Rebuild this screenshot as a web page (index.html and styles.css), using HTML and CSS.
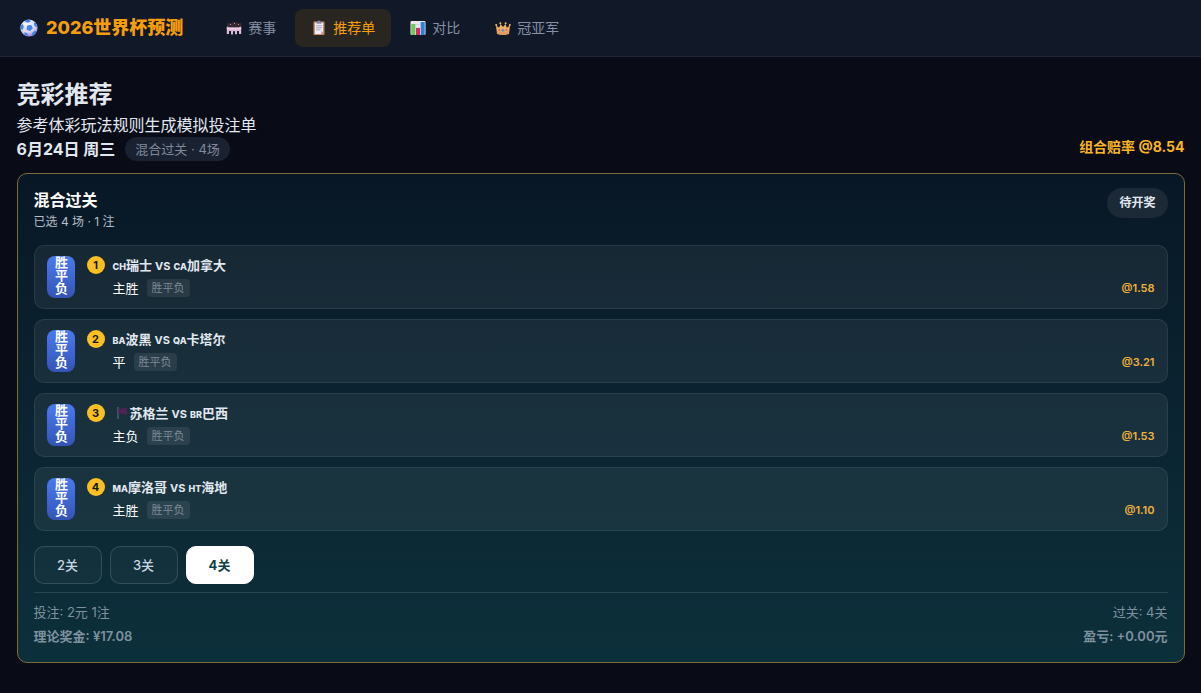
FILE: index.html
```html
<!DOCTYPE html>
<html lang="zh-CN">
<head>
<meta charset="utf-8">
<meta name="viewport" content="width=device-width, initial-scale=1">
<title>2026世界杯预测</title>
<link rel="stylesheet" href="styles.css">
</head>
<body>
<header class="topbar">
  <a class="brand" href="#">
    <svg class="brand-icon" viewBox="0 0 18 18" aria-hidden="true">
      <defs><radialGradient id="ball" cx=".4" cy=".25" r=".85"><stop offset="0" stop-color="#f4f4fb"/><stop offset=".6" stop-color="#d5d3f2"/><stop offset="1" stop-color="#7b62dc"/></radialGradient></defs>
      <circle cx="9" cy="9" r="8.6" fill="url(#ball)"/>
      <path d="M7.2 6.4l4-.4 1.6 3.2-2.6 2.9-3.6-1.4zM5 1.4L9.5.5l1.3 1.7-2.6 1.6-3-.7zM.6 7.1l2-2 1.2 2.6-1.2 3.2-1.8-.8zM4.2 13.2l3.2 1 .7 3-3.2-1.1zM12.2 14l2.6-2.3 1.9.8-2.2 3.4-2.4 1zM14 3.6l1.8.5 1.6 3.6-1.4.4-2-2.2z" fill="#3d83e6"/>
    </svg>
    <span>2026世界杯预测</span>
  </a>
  <nav class="nav">
    <a class="nav-link" href="#">
      <svg class="nav-icon" viewBox="0 0 16 16" aria-hidden="true">
        <path d="M1 7V3.5l1.5-1L4 3.2 7 2h3l3 1.2 1.5-.7 1 1V7z" fill="#332936"/>
        <path d="M4 4h1v1H4zm4-1h1v1H8zm4 1h1v1h-1z" fill="#c99055"/>
        <path d="M.8 6.400L3 7.200h10l2.200-.8V14H13v-3h-2v3.200H9v-3H7v3.200H5V11H3v3H.8z" fill="#dcb9d5"/>
        <path d="M.8 7.500L3 8.300h10l2.200-.8v1.200l-2.200.6H3l-2.200-.6z" fill="#f2dcea"/>
      </svg>
      <span>赛事</span>
    </a>
    <a class="nav-link active" href="#" aria-current="page">
      <svg class="nav-icon" viewBox="0 0 16 16" aria-hidden="true">
        <rect x="2.5" y="1.5" width="11" height="13.5" rx="1" fill="#c98a68"/>
        <path d="M4 2.8h8v8.7L10 14H4z" fill="#f1edf8"/>
        <path d="M12 11.5L10 14v-2.5z" fill="#b9afd0"/>
        <path d="M5.5 1.5h1.2a1.4 1.4 0 012.6 0h1.2v2.2h-5z" fill="#8d8aa5"/>
        <path d="M5 5.8h6M5 7.8h6M5 9.8h4.5" stroke="#9c98b5" stroke-width=".9"/>
      </svg>
      <span>推荐单</span>
    </a>
    <a class="nav-link" href="#">
      <svg class="nav-icon" viewBox="0 0 16 16" aria-hidden="true">
        <rect x=".5" y="1" width="15" height="14" rx="1" fill="#e9e5f1"/>
        <path d="M.5 4.5h15M.5 8h15M.5 11.5h15" stroke="#c9c3d6" stroke-width=".6"/>
        <rect x="1.3" y="4" width="4" height="11" fill="#6fc85a"/>
        <rect x="6" y="8" width="4" height="7" fill="#d52c63"/>
        <rect x="10.7" y="2" width="4" height="13" fill="#2b83d3"/>
      </svg>
      <span>对比</span>
    </a>
    <a class="nav-link" href="#">
      <svg class="nav-icon" viewBox="0 0 16 16" aria-hidden="true">
        <path d="M1 5.5l3.2 2.2L5.5 4l2.5 3 2.5-3 1.3 3.7L15 5.5 14 14q-6 1.8-12 0z" fill="#f2b066"/>
        <path d="M2 11q6 1.8 12 0l-.3 2.8q-5.7 1.6-11.4 0z" fill="#e09a62"/>
        <circle cx="1.2" cy="5" r="1" fill="#f6bf62"/><circle cx="5.4" cy="3.2" r="1" fill="#f6bf62"/><circle cx="10.6" cy="3.2" r="1" fill="#f6bf62"/><circle cx="14.8" cy="5" r="1" fill="#f6bf62"/>
        <circle cx="8" cy="10.3" r="1.5" fill="#7a8bb8"/><circle cx="4.4" cy="10" r="1" fill="#d9655f"/><circle cx="11.6" cy="10" r="1" fill="#d9655f"/>
      </svg>
      <span>冠亚军</span>
    </a>
  </nav>
</header>

<main class="page">
  <h1 class="page-title">竞彩推荐</h1>
  <p class="page-sub">参考体彩玩法规则生成模拟投注单</p>
  <div class="day-row">
    <div class="day">
      <h2 class="day-title">6月24日 周三</h2>
      <span class="day-chip">混合过关 · 4场</span>
    </div>
    <strong class="combo-odds">组合赔率 @8.54</strong>
  </div>

  <section class="ticket">
    <div class="ticket-head">
      <div>
        <h3 class="ticket-title">混合过关</h3>
        <p class="ticket-sub">已选 4 场 · 1 注</p>
      </div>
      <span class="status">待开奖</span>
    </div>

    <ol class="picks">
      <li class="pick">
        <span class="play">胜平负</span>
        <span class="num">1</span>
        <div class="info">
          <div class="teams"><span class="code">CH</span>瑞士 <span class="vs">VS</span> <span class="code">CA</span>加拿大</div>
          <div class="choice"><span>主胜</span><span class="tag">胜平负</span></div>
        </div>
        <span class="odds">@1.58</span>
      </li>
      <li class="pick">
        <span class="play">胜平负</span>
        <span class="num">2</span>
        <div class="info">
          <div class="teams"><span class="code">BA</span>波黑 <span class="vs">VS</span> <span class="code">QA</span>卡塔尔</div>
          <div class="choice"><span>平</span><span class="tag">胜平负</span></div>
        </div>
        <span class="odds">@3.21</span>
      </li>
      <li class="pick">
        <span class="play">胜平负</span>
        <span class="num">3</span>
        <div class="info">
          <div class="teams"><svg class="flag" viewBox="0 0 17 14" aria-hidden="true"><path d="M5 1v12" stroke="#65717d" stroke-width="1"/><path d="M5.5 2q2.5 1 4.5 0t4 0v6q-2 1-4 0t-4.500 0z" fill="#4b2355"/></svg>苏格兰 <span class="vs">VS</span> <span class="code">BR</span>巴西</div>
          <div class="choice"><span>主负</span><span class="tag">胜平负</span></div>
        </div>
        <span class="odds">@1.53</span>
      </li>
      <li class="pick">
        <span class="play">胜平负</span>
        <span class="num">4</span>
        <div class="info">
          <div class="teams"><span class="code">MA</span>摩洛哥 <span class="vs">VS</span> <span class="code">HT</span>海地</div>
          <div class="choice"><span>主胜</span><span class="tag">胜平负</span></div>
        </div>
        <span class="odds">@1.10</span>
      </li>
    </ol>

    <div class="passes">
      <button class="pass" type="button">2关</button>
      <button class="pass" type="button">3关</button>
      <button class="pass selected" type="button" aria-pressed="true">4关</button>
    </div>

    <div class="summary">
      <div class="sum-row"><span>投注: 2元 1注</span><span>过关: 4关</span></div>
      <div class="sum-row strong"><span>理论奖金: ¥17.08</span><span>盈亏: +0.00元</span></div>
    </div>
  </section>
</main>
</body>
</html>
```
FILE: styles.css
```css
* { box-sizing: border-box; }

body {
  margin: 0;
  min-height: 100vh;
  background: #090c17;
  color: #e2e8f0;
  font: 16px/24px Inter, "Noto Sans CJK SC", sans-serif;
}

h1, h2, h3, p, ol { margin: 0; padding: 0; }
a { color: inherit; text-decoration: none; }

.topbar {
  display: flex;
  align-items: center;
  gap: 27px;
  height: 57px;
  padding: 0 20px;
  background: #111827;
  border-bottom: 1px solid #1e2638;
}
.brand {
  display: flex;
  align-items: center;
  gap: 8px;
  color: #f59e0b;
  font-size: 18px;
  font-weight: 800;
}
.brand-icon { width: 18px; height: 18px; }
.nav { display: flex; gap: 3px; }
.nav-link {
  display: flex;
  align-items: center;
  gap: 6px;
  height: 38px;
  padding: 0 16px;
  border-radius: 8px;
  color: #8490a5;
  font-size: 14px;
}
.nav-link.active { background: #292621; color: #f59e0b; }
.nav-icon { width: 16px; height: 16px; }

.page {
  max-width: 1200px;
  margin: 0 auto;
  padding: 20px 16px 31px;
}
.page-title { font-size: 24px; line-height: 36px; font-weight: 700; }
.day-row {
  display: flex;
  justify-content: space-between;
  margin-bottom: 12px;
}
.day { display: flex; align-items: center; gap: 10px; }
.day-title { font-size: 16px; line-height: 24px; font-weight: 700; }
.day-chip {
  padding: 0 10px;
  border-radius: 12px;
  background: #1a2232;
  color: #7f899b;
  font-size: 13px;
}
.combo-odds { color: #fbb424; font-size: 14px; line-height: 20px; }

.ticket {
  padding: 14px 16px;
  border: 1px solid #7b6c38;
  border-radius: 10px;
  background: linear-gradient(#081725 0%, #0b2431 50%, #0c303b 100%);
}
.ticket-head {
  display: flex;
  justify-content: space-between;
  align-items: flex-start;
  margin-bottom: 13px;
}
.ticket-title { color: #fff; font-size: 16px; line-height: 24px; font-weight: 700; }
.ticket-sub { color: #b5bec7; font-size: 12px; line-height: 20px; }
.status {
  padding: 0 12px;
  border-radius: 15px;
  background: #1c2a38;
  color: #e2e8f0;
  font-size: 12px;
  line-height: 30px;
  font-weight: 700;
}

.picks {
  display: flex;
  flex-direction: column;
  gap: 10px;
  list-style: none;
}
.pick {
  display: flex;
  align-items: flex-start;
  padding: 10px 12px;
  border: 1px solid rgba(255, 255, 255, .08);
  border-radius: 10px;
  background: rgba(255, 255, 255, .06);
}
.play {
  width: 28px;
  height: 42px;
  margin-right: 12px;
  padding: 0 6px 0 8px;
  border-radius: 8px;
  background: linear-gradient(#4a7af0, #3454b6);
  color: #fff;
  font-size: 13px;
  line-height: 13px;
  font-weight: 700;
  text-align: center;
}
.num {
  width: 18px;
  margin-right: 8px;
  border-radius: 50%;
  background: #fbbf24;
  color: #111827;
  font-size: 11px;
  line-height: 18px;
  font-weight: 700;
  text-align: center;
}
.info { flex: 1; }
.teams { height: 18px; font-size: 13px; line-height: 18px; font-weight: 700; }
.code { font-size: 9px; font-weight: 800; }
.vs { font-size: 11px; font-weight: 700; }
.flag { width: 17px; height: 14px; vertical-align: -2px; }
.choice {
  display: flex;
  align-items: center;
  gap: 8px;
  margin-top: 4px;
  color: #fff;
  font-size: 13px;
  line-height: 20px;
}
.tag {
  padding: 0 5px;
  border-radius: 4px;
  background: rgba(255, 255, 255, .08);
  color: #7d8b99;
  font-size: 11px;
  line-height: 18px;
}
.odds {
  align-self: flex-end;
  color: #f0b13c;
  font-size: 11px;
  line-height: 20px;
  font-weight: 600;
}

.passes { display: flex; gap: 8px; margin: 15px 0 8px; }
.pass {
  width: 68px;
  height: 38px;
  padding: 0;
  border: 1px solid rgba(255, 255, 255, .14);
  border-radius: 10px;
  background: rgba(255, 255, 255, .03);
  color: #cbd5e1;
  font: inherit;
  font-size: 13px;
  font-weight: 500;
}
.pass.selected {
  border-color: #fff;
  background: #fff;
  color: #0f3f49;
  font-weight: 700;
}

.summary {
  padding-top: 7px;
  border-top: 1px solid rgba(255, 255, 255, .12);
  color: #7f919f;
  font-size: 13px;
}
.sum-row { display: flex; justify-content: space-between; }
.sum-row.strong { font-weight: 600; }
```
